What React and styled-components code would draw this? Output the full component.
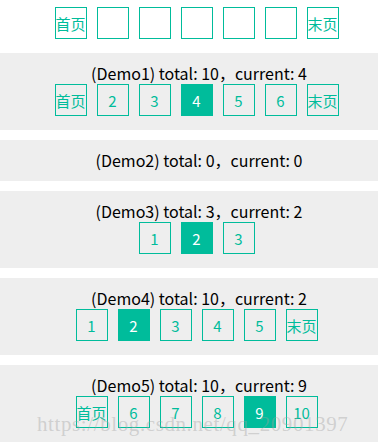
import React from "react";
import styled, { createGlobalStyle } from "styled-components";

const GlobalStyle = createGlobalStyle`
  html, body {
    margin: 0;
    padding: 0;
    background: #fff;
    overflow: hidden;
  }
  body {
    font-family: "Noto Sans CJK SC", "Noto Sans", sans-serif;
    color: #000;
  }
`;

const Page = styled.div`
  position: relative;
  width: 378px;
  height: 445px;
  overflow: hidden;
`;

const Section = styled.div`
  background-color: ${props => (props.plain ? "#fff" : "#eee")};
  padding: ${props => (props.plain ? "7px 0 0 15px" : "10px 0 10px 15px")};
  margin-bottom: 10px;
  text-align: center;
`;

const Title = styled.div`
  font-size: 16px;
  line-height: 21px;
  padding-left: 5px;
  white-space: nowrap;
`;

const Pager = styled.div`
  display: flex;
  justify-content: center;
  gap: 10px;
  padding-bottom: 4px;
`;

const PageBox = styled.span`
  box-sizing: border-box;
  width: 32px;
  height: 32px;
  display: flex;
  align-items: center;
  justify-content: center;
  border: 1px solid #00bc9b;
  background-color: ${props => (props.active ? "#00bc9b" : "transparent")};
  color: ${props => (props.active ? "#fff" : "#00bc9b")};
  font-size: 15px;
  white-space: nowrap;
  overflow: hidden;
`;

const Watermark = styled.div`
  position: absolute;
  left: 37px;
  top: 412px;
  font-family: "Liberation Serif", serif;
  font-size: 21px;
  letter-spacing: 0.6px;
  color: rgba(160, 160, 160, 0.4);
  white-space: nowrap;
  pointer-events: none;
`;

const demos = [
  { label: "(Demo1) total: 10，current: 4", pages: ["首页", "2", "3", "4", "5", "6", "末页"], active: "4" },
  { label: "(Demo2) total: 0，current: 0", pages: [] },
  { label: "(Demo3) total: 3，current: 2", pages: ["1", "2", "3"], active: "2" },
  { label: "(Demo4) total: 10，current: 2", pages: ["1", "2", "3", "4", "5", "末页"], active: "2" },
  { label: "(Demo5) total: 10，current: 9", pages: ["首页", "6", "7", "8", "9", "10"], active: "9" },
];

const Pagination = ({ pages, active }) => {
  if (!pages.length) return null;
  return (
    <Pager>
      {pages.map((p, i) => (
        <PageBox key={i} active={p === active}>
          {p}
        </PageBox>
      ))}
    </Pager>
  );
};

const App = () => {
  return (
    <Page>
      <GlobalStyle />
      <Section plain>
        <Pagination pages={["首页", "", "", "", "", "", "末页"]} />
      </Section>
      {demos.map(d => (
        <Section key={d.label}>
          <Title>{d.label}</Title>
          <Pagination pages={d.pages} active={d.active} />
        </Section>
      ))}
      <Watermark>https://blog.csdn.net/qq_20901397</Watermark>
    </Page>
  );
};

export default App;
